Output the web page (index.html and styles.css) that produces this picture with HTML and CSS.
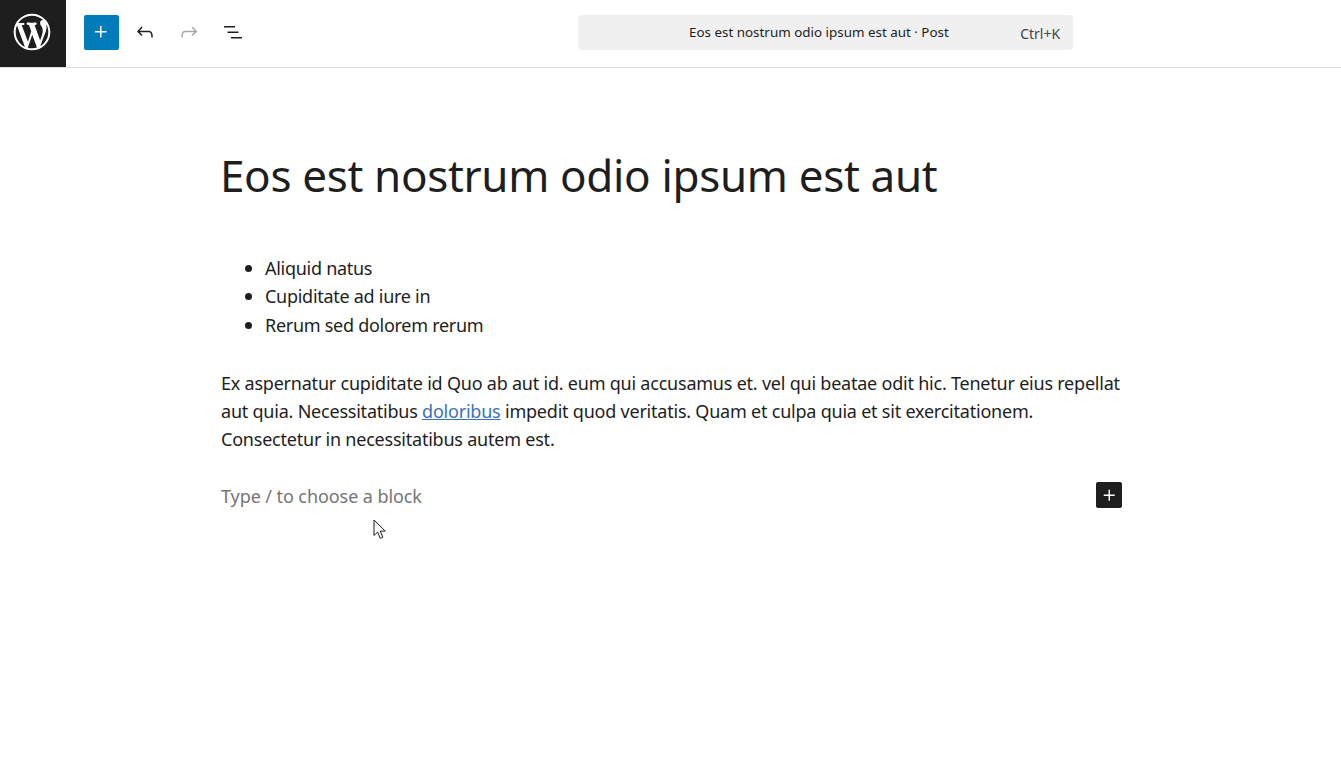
FILE: index.html
```html
<!DOCTYPE html>
<html lang="en">
<head>
<meta charset="utf-8">
<title>Eos est nostrum odio ipsum est aut</title>
<link rel="stylesheet" href="styles.css">
</head>
<body>
<header class="topbar">
  <a class="logo" href="#" aria-label="WordPress">
    <svg class="logo-svg" viewBox="-2 -2 24 24"><path d="M20 10c0-5.51-4.49-10-10-10C4.48 0 0 4.49 0 10c0 5.52 4.48 10 10 10 5.51 0 10-4.48 10-10zM7.78 15.37L4.37 6.22c.55-.02 1.17-.08 1.17-.08.5-.06.44-1.13-.06-1.11 0 0-1.45.11-2.37.11-.18 0-.37 0-.58-.01C4.12 2.69 6.87 1.11 10 1.11c2.33 0 4.45.87 6.05 2.34-.68-.11-1.65.39-1.65 1.58 0 .74.45 1.36.9 2.1.35.61.55 1.36.55 2.46 0 1.49-1.4 5-1.4 5l-3.03-8.37c.54-.02.82-.17.82-.17.5-.05.44-1.25-.06-1.22 0 0-1.44.12-2.38.12-.87 0-2.33-.12-2.33-.12-.5-.03-.56 1.2-.06 1.22l.92.08 1.26 3.41zM17.41 10c.24-.64.74-1.87.43-4.25.7 1.29 1.05 2.71 1.05 4.25 0 3.29-1.73 6.24-4.4 7.78.97-2.59 1.94-5.2 2.92-7.78zM6.1 18.09C3.12 16.65 1.11 13.53 1.11 10c0-1.3.23-2.48.72-3.59C3.25 10.3 4.67 14.2 6.1 18.09zm4.03-6.63l2.58 6.98c-.86.29-1.76.45-2.71.45-.79 0-1.57-.11-2.29-.33.81-2.38 1.62-4.74 2.42-7.1z"/></svg>
  </a>
  <div class="tools">
    <button class="tool tool-add" aria-label="Add block"><svg class="icon" viewBox="0 0 24 24"><path d="M11 12.5V17.5H12.5V12.5H17.5V11H12.5V6H11V11H6V12.5H11Z"/></svg></button>
    <button class="tool" aria-label="Undo"><svg class="icon" viewBox="0 0 24 24"><path d="M18.3 11.7c-.6-.6-1.4-.9-2.3-.9H6.7l2.9-3.3-1.1-1-4.5 5L8.5 16l1-1-2.7-2.7H16c.5 0 .9.2 1.3.5 1 1 1 3.4 1 4.5v.3h1.5v-.2c0-1.5 0-4.3-1.5-5.7z"/></svg></button>
    <button class="tool tool-off" aria-label="Redo"><svg class="icon" viewBox="0 0 24 24"><path d="M15.6 6.5l-1.1 1 2.9 3.3H8c-.9 0-1.7.3-2.3.9-1.4 1.5-1.4 4.2-1.4 5.7v.2h1.5v-.3c0-1.1 0-3.5 1-4.5.3-.3.7-.5 1.3-.5h9.2L14.5 15l1.1 1.1 4.6-4.6-4.6-5z"/></svg></button>
    <button class="tool" aria-label="List view"><svg class="icon" viewBox="0 0 24 24"><path d="M3 6h11v1.5H3V6Zm3.5 5.5h11V13h-11v-1.5ZM21 17H10v1.5h11V17Z"/></svg></button>
  </div>
  <div class="command">
    <span class="command-title">Eos est nostrum odio ipsum est aut · Post</span>
    <span class="command-key">Ctrl+K</span>
  </div>
</header>
<main class="canvas">
  <h1 class="post-title">Eos est nostrum odio ipsum est aut</h1>
  <ul class="post-list">
    <li>Aliquid natus</li>
    <li>Cupiditate ad iure in</li>
    <li>Rerum sed dolorem rerum</li>
  </ul>
  <p class="post-para">Ex aspernatur cupiditate id Quo ab aut id. eum qui accusamus et. vel qui beatae odit hic. Tenetur eius repellat aut quia. Necessitatibus <a href="#">doloribus</a> impedit quod veritatis. Quam et culpa quia et sit exercitationem. Consectetur in necessitatibus autem est.</p>
  <div class="placeholder-row">
    <span class="placeholder">Type / to choose a block</span>
    <button class="inserter" aria-label="Add block"><svg class="inserter-icon" viewBox="0 0 24 24"><path d="M11 12.5V17.5H12.5V12.5H17.5V11H12.5V6H11V11H6V12.5H11Z"/></svg></button>
  </div>
</main>
<svg class="cursor" viewBox="0 0 14 21"><path d="M1 1v15.5l3.6-3.4 2.6 6.2 2.6-1.1-2.6-6.1h5z" fill="#fff" stroke="#1a1a1a" stroke-width="1"/></svg>
</body>
</html>
```
FILE: styles.css
```css
* { box-sizing: border-box; }
html, body { margin: 0; height: 100%; }
body {
  position: relative;
  background: #fff;
  color: #1e1e1e;
  font-family: "Noto Sans", "Open Sans", sans-serif;
  overflow: hidden;
}
.topbar {
  display: flex;
  align-items: center;
  height: 68px;
  border-bottom: 1px solid #e0e0e0;
}
.logo {
  display: flex;
  align-items: center;
  justify-content: center;
  width: 66px;
  height: 67px;
  padding: 0 3px 3px 0;
  background: #1e1e1e;
}
.logo-svg { width: 44px; height: 44px; fill: #fff; flex: none; }
.tools {
  display: flex;
  align-items: center;
  gap: 9px;
  margin: 0 0 2px 18px;
}
.tool {
  display: flex;
  align-items: center;
  justify-content: center;
  width: 35px;
  height: 35px;
  padding: 0 1px 1px 0;
  border: 0;
  border-radius: 2px;
  background: none;
  fill: #1e1e1e;
}
.tool-add { background: #007cba; fill: #fff; }
.tool-off { fill: #a6a6a6; }
.icon { width: 24px; height: 24px; display: block; }
.command {
  display: flex;
  align-items: center;
  width: 495px;
  height: 35px;
  margin: 0 0 2px 327px;
  padding: 0 13px 0 111px;
  border-radius: 4px;
  background: #f0f0f0;
  font-size: 13.4px;
  color: #1e1e1e;
}
.command-title { flex: 1; padding-bottom: 1px; }
.command-key { color: #444; font-size: 13.9px; padding-top: 1px; }
.canvas {
  width: 900px;
  margin-left: 221px;
}
.post-title {
  margin: 76px 0 0 -1px;
  font-size: 44px;
  font-weight: 400;
  letter-spacing: -0.34px;
  line-height: 62px;
}
.post-list {
  margin: 48px 0 0;
  padding: 0 0 0 24px;
  font-size: 18px;
  letter-spacing: -0.28px;
  line-height: 28.4px;
  list-style: none;
}
.post-list li {
  display: flex;
  align-items: center;
  gap: 13px;
}
.post-list li::before {
  content: "";
  flex: none;
  width: 7px;
  height: 7px;
  border-radius: 50%;
  background: #1e1e1e;
}
.post-para {
  margin: 30px 0 0;
  font-size: 18px;
  letter-spacing: -0.22px;
  line-height: 28px;
}
.post-para a { color: #3a72b8; }
.placeholder-row {
  display: flex;
  align-items: center;
  justify-content: space-between;
  margin-top: 29px;
  height: 28px;
}
.placeholder { font-size: 18px; letter-spacing: -0.08px; color: #757575; }
.inserter {
  display: flex;
  align-items: center;
  justify-content: center;
  width: 26px;
  height: 26px;
  margin: 0 -1px 2px 0;
  padding: 0;
  border: 0;
  border-radius: 2px;
  background: #1e1e1e;
  fill: #fff;
}
.inserter-icon { width: 23px; height: 23px; display: block; }
.cursor {
  position: absolute;
  left: 373px;
  top: 519px;
  width: 14px;
  height: 21px;
}
```
